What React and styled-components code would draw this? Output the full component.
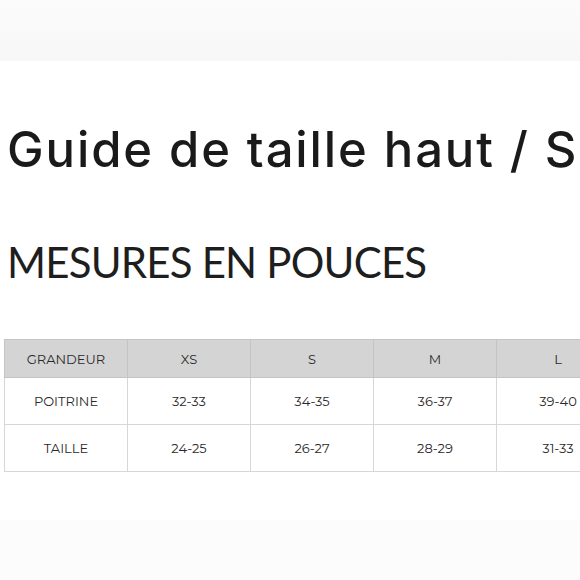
import React from "react";
import styled, { createGlobalStyle } from "styled-components";

const Global = createGlobalStyle`
  html, body { margin: 0; padding: 0; background: #ffffff; }
  body { width: 580px; height: 580px; overflow: hidden; }
`;

const Page = styled.div`
  width: 580px;
  height: 580px;
  display: flex;
  flex-direction: column;
  overflow: hidden;
  background: #ffffff;
`;

const TopBand = styled.div`
  height: 61px;
  flex: none;
  background: linear-gradient(180deg, #fbfbfb 0%, #f7f7f7 100%);
`;

const Content = styled.div`
  flex: 1;
  display: flex;
  flex-direction: column;
  padding: 0 0 0 4px;
`;

const Title = styled.h1`
  margin: 61px 0 0 3px;
  font-family: "Inter", "Liberation Sans", sans-serif;
  font-weight: 500;
  font-size: 49px;
  line-height: 56px;
  color: #1a1a1a;
  white-space: nowrap;
  letter-spacing: 1.9px;
`;

const Subtitle = styled.h2`
  margin: 62px 0 0 3px;
  font-family: "Lato", "Liberation Sans", sans-serif;
  font-weight: 400;
  font-size: 42px;
  line-height: 44px;
  color: #1e1e1e;
  white-space: nowrap;
  letter-spacing: -0.8px;
`;

const Table = styled.table`
  margin-top: 55px;
  border-collapse: collapse;
  table-layout: fixed;
  width: 738px;
  font-family: "Montserrat", "Inter", "Liberation Sans", sans-serif;
  font-size: 13px;
  color: #2a2a2a;
`;

const Cell = styled.td`
  width: 122px;
  border: 1px solid #cfcfcf;
  text-align: center;
  height: ${(p) => (p.$head ? "37px" : "46px")};
  padding: 0;
  background: ${(p) => (p.$head ? "#d4d4d4" : "#ffffff")};
  border-color: ${(p) => (p.$head ? "#c4c4c4" : "#d6d6d6")};
`;

const BottomBand = styled.div`
  height: 60px;
  flex: none;
  background: #fcfcfc;
`;

const rows = [
  ["GRANDEUR", "XS", "S", "M", "L", "XL"],
  ["POITRINE", "32-33", "34-35", "36-37", "39-40", "41-42"],
  ["TAILLE", "24-25", "26-27", "28-29", "31-33", "34-35"],
];

export default function App() {
  return (
    <Page>
      <Global />
      <TopBand />
      <Content>
        <Title>Guide de taille haut / S</Title>
        <Subtitle>MESURES EN POUCES</Subtitle>
        <Table>
          <tbody>
            {rows.map((r, i) => (
              <tr key={i}>
                {r.map((c, j) => (
                  <Cell key={j} $head={i === 0}>
                    {c}
                  </Cell>
                ))}
              </tr>
            ))}
          </tbody>
        </Table>
      </Content>
      <BottomBand />
    </Page>
  );
}
